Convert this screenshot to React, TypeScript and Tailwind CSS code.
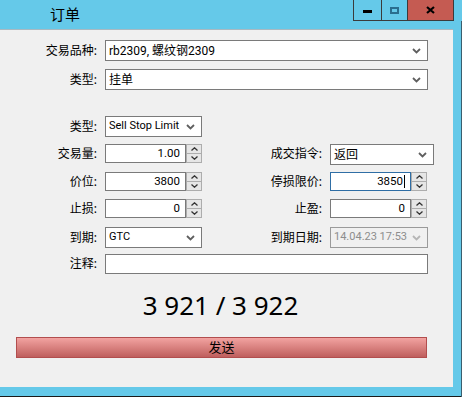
import React from "react";

const font = "font-['Noto_Sans','Noto_Sans_CJK_SC',sans-serif]";
const ctl = "font-['Roboto','Noto_Sans_CJK_SC',sans-serif]";

const Chevron = ({ color = "#5f5f5f" }: { color?: string }) => (
  <svg width="9" height="6" viewBox="0 0 9 6">
    <path d="M1 1l3.5 3.5L8 1" stroke={color} strokeWidth="1.8" fill="none" />
  </svg>
);

const Combo = ({
  value,
  width,
  disabled,
  size = "text-[11px]",
}: {
  value: React.ReactNode;
  width: string;
  disabled?: boolean;
  size?: string;
}) => (
  <div
    className={`${width} h-[21px] flex items-center justify-between pl-[3px] pr-[6px] border ${ctl} ${size} ${
      disabled ? "border-[#9a9a9a] bg-[#f0f0f0] text-[#8d8d8d]" : "border-[#7a7a7a] bg-white text-black"
    }`}
  >
    <span className="whitespace-nowrap">{value}</span>
    <Chevron color={disabled ? "#b5b5b5" : "#5f5f5f"} />
  </div>
);

const Spin = ({ value, focused }: { value: string; focused?: boolean }) => (
  <div className={`flex h-[19px] ${ctl} text-[11.5px]`}>
    <div
      className={`w-[81px] h-full flex items-center justify-end pr-[5px] bg-white border ${
        focused ? "border-[#2f6ea5]" : "border-[#7a7a7a]"
      }`}
    >
      <span>{value}</span>
      {focused && <span className="w-px h-[13px] bg-black ml-px" />}
    </div>
    <div className="w-[16px] h-full flex flex-col">
      <div className="flex-1 flex items-center justify-center bg-[#e6e6e6] border border-[#adadad]">
        <svg width="7" height="4" viewBox="0 0 7 4">
          <path d="M0.5 3.5L3.5 0.8L6.5 3.5" stroke="#333" strokeWidth="1.3" fill="none" />
        </svg>
      </div>
      <div className="flex-1 flex items-center justify-center bg-[#e6e6e6] border border-t-0 border-[#adadad]">
        <svg width="7" height="4" viewBox="0 0 7 4">
          <path d="M0.5 0.5L3.5 3.2L6.5 0.5" stroke="#333" strokeWidth="1.3" fill="none" />
        </svg>
      </div>
    </div>
  </div>
);

const Label = ({ text, width }: { text: string; width: string }) => (
  <div className={`${width} text-right whitespace-nowrap`}>{text}</div>
);

export default function App() {
  return (
    <div className={`w-[462px] h-[397px] bg-[#65c9e9] flex flex-col relative overflow-hidden ${font} text-[12px] text-black`}>
      {/* title bar */}
      <div className="h-[29px] flex items-start">
        <div className="ml-[50px] mt-[5px] text-[15px] leading-[18px]">订单</div>
        <div className="ml-auto mr-[8px] flex h-[21px] border border-t-0 border-[#3b3b3b]">
          <div className="w-[28px] flex items-center justify-center border-r border-[#3b3b3b]">
            <div className="w-[9px] h-[3px] bg-black mt-[3px]" />
          </div>
          <div className="w-[26px] flex items-center justify-center border-r border-[#3b3b3b]">
            <div className="w-[9px] h-[7px] border-2 border-[#2a6e8e]" />
          </div>
          <div className="w-[45px] flex items-center justify-center bg-[#c55b52]">
            <svg width="9" height="8" viewBox="0 0 9 8">
              <path d="M1 1l7 6M8 1l-7 6" stroke="#000" strokeWidth="2.2" />
            </svg>
          </div>
        </div>
      </div>

      {/* client area */}
      <div className="w-[453px] h-[358px] bg-[#f0f0f0] border-t border-[#a9b9c1] flex flex-col">
        <div className="mt-[10px] h-[21px] flex items-center">
          <Label text="交易品种:" width="w-[97px]" />
          <div className="ml-[8px]">
            <Combo value="rb2309, 螺纹钢2309" width="w-[323px]" size="text-[12px]" />
          </div>
        </div>
        <div className="mt-[8px] h-[21px] flex items-center">
          <Label text="类型:" width="w-[97px]" />
          <div className="ml-[8px]">
            <Combo value="挂单" width="w-[323px]" size="text-[12px]" />
          </div>
        </div>

        <div className="mt-[26px] h-[21px] flex items-center">
          <Label text="类型:" width="w-[97px]" />
          <div className="ml-[8px]">
            <Combo value="Sell Stop Limit" width="w-[97px]" />
          </div>
        </div>

        <div className="mt-[7px] h-[20px] flex items-center">
          <Label text="交易量:" width="w-[97px]" />
          <div className="ml-[8px] self-start">
            <Spin value="1.00" />
          </div>
          <Label text="成交指令:" width="w-[120px]" />
          <div className="ml-[8px]">
            <div className="h-[20px] flex">
              <Combo value="返回" width="w-[104px]" size="text-[12px]" />
            </div>
          </div>
        </div>

        <div className="mt-[8px] h-[19px] flex items-center">
          <Label text="价位:" width="w-[97px]" />
          <div className="ml-[8px]">
            <Spin value="3800" />
          </div>
          <Label text="停损限价:" width="w-[120px]" />
          <div className="ml-[8px]">
            <Spin value="3850" focused />
          </div>
        </div>

        <div className="mt-[8px] h-[19px] flex items-center">
          <Label text="止损:" width="w-[97px]" />
          <div className="ml-[8px]">
            <Spin value="0" />
          </div>
          <Label text="止盈:" width="w-[120px]" />
          <div className="ml-[8px]">
            <Spin value="0" />
          </div>
        </div>

        <div className="mt-[9px] h-[21px] flex items-center">
          <Label text="到期:" width="w-[97px]" />
          <div className="ml-[8px]">
            <Combo value="GTC" width="w-[97px]" />
          </div>
          <Label text="到期日期:" width="w-[120px]" />
          <div className="ml-[8px]">
            <Combo value="14.04.23 17:53" width="w-[98px]" disabled />
          </div>
        </div>

        <div className="mt-[6px] h-[20px] flex items-center">
          <Label text="注释:" width="w-[97px]" />
          <div className="ml-[8px] w-[323px] h-[20px] bg-white border border-[#7a7a7a]" />
        </div>

        <div className="mt-[13px] h-[36px] flex items-center justify-center pr-[12px] text-[26px] leading-[36px]">
          3 921 / 3 922
        </div>

        <div className="mt-[14px] ml-[16px] w-[411px] h-[21px] flex items-center justify-center text-[13px] border border-[#b24e4e] bg-gradient-to-b from-[#f2a3a1] to-[#bf5f5e]">
          发送
        </div>
      </div>
      <div className="absolute left-0 bottom-0 w-full h-px bg-[#1a1a1a]" />
      <div className="absolute right-0 top-[21px] bottom-0 w-px bg-[#3a5f6e]" />
    </div>
  );
}
